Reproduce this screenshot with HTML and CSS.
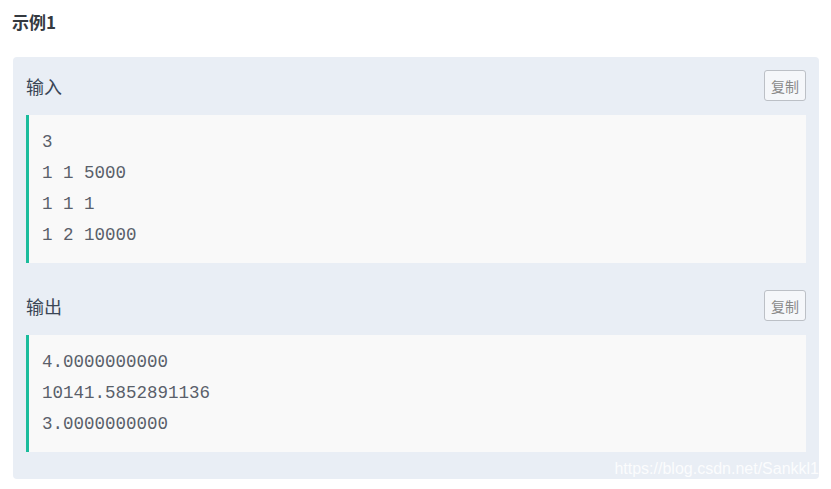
FILE: index.html
```html
<!DOCTYPE html>
<html>
<head>
    <meta charset="UTF-8">
    <title>示例1</title>
    <link rel="stylesheet" href="styles.css">
</head>
<body>
    <div class="sample-title">示例1</div>

    <div class="sample-card">
        <div class="sample-section">
            <div class="sample-header">
                <span class="sample-label">输入</span>
                <button class="copy-button">复制</button>
            </div>
            <pre class="sample-code">3
1 1 5000
1 1 1
1 2 10000</pre>
        </div>

        <div class="sample-section">
            <div class="sample-header">
                <span class="sample-label">输出</span>
                <button class="copy-button">复制</button>
            </div>
            <pre class="sample-code">4.0000000000
10141.5852891136
3.0000000000</pre>
        </div>

        <div class="watermark">https://blog.csdn.net/Sankkl1</div>
    </div>
</body>
</html>
```

FILE: styles.css
```css
body {
    margin: 0;
    padding: 11px 12px 0 12px;
    font-family: "Liberation Sans", "Noto Sans CJK SC", sans-serif;
    background-color: #ffffff;
    color: #34495e;
}

.sample-title {
    font-family: "Noto Sans CJK SC", sans-serif;
    font-size: 17px;
    font-weight: bold;
    line-height: 22px;
    color: #34393f;
    margin-bottom: 24px;
}

.sample-card {
    position: relative;
    margin-left: 1px;
    background-color: #e9eef5;
    border-radius: 4px;
    padding: 0 13px 13px 13px;
}

.sample-section {
    padding: 13px 0 14px 0;
}

.sample-header {
    display: flex;
    align-items: center;
    justify-content: space-between;
    height: 31px;
    margin-bottom: 14px;
}

.sample-label {
    font-family: "Noto Sans CJK SC", sans-serif;
    font-size: 18px;
    color: #3a4656;
}

.copy-button {
    width: 42px;
    height: 31px;
    padding: 0;
    font-family: "Noto Sans CJK SC", sans-serif;
    font-size: 14px;
    color: #8a8a8a;
    background-color: #f5f7fa;
    border: 1px solid #bcc0c6;
    border-radius: 3px;
    cursor: pointer;
}

.sample-code {
    margin: 0;
    padding: 12px 13px;
    background-color: #f9f9f9;
    border-left: 3px solid #1abc9c;
    font-family: "Liberation Mono", monospace;
    font-size: 17.5px;
    line-height: 31px;
    color: #5a5f6a;
}

/* Водяной знак */
.watermark {
    position: absolute;
    right: 0;
    bottom: 1px;
    font-family: "Liberation Sans", sans-serif;
    font-size: 16px;
    color: rgba(255, 255, 255, 0.85);
}
```
